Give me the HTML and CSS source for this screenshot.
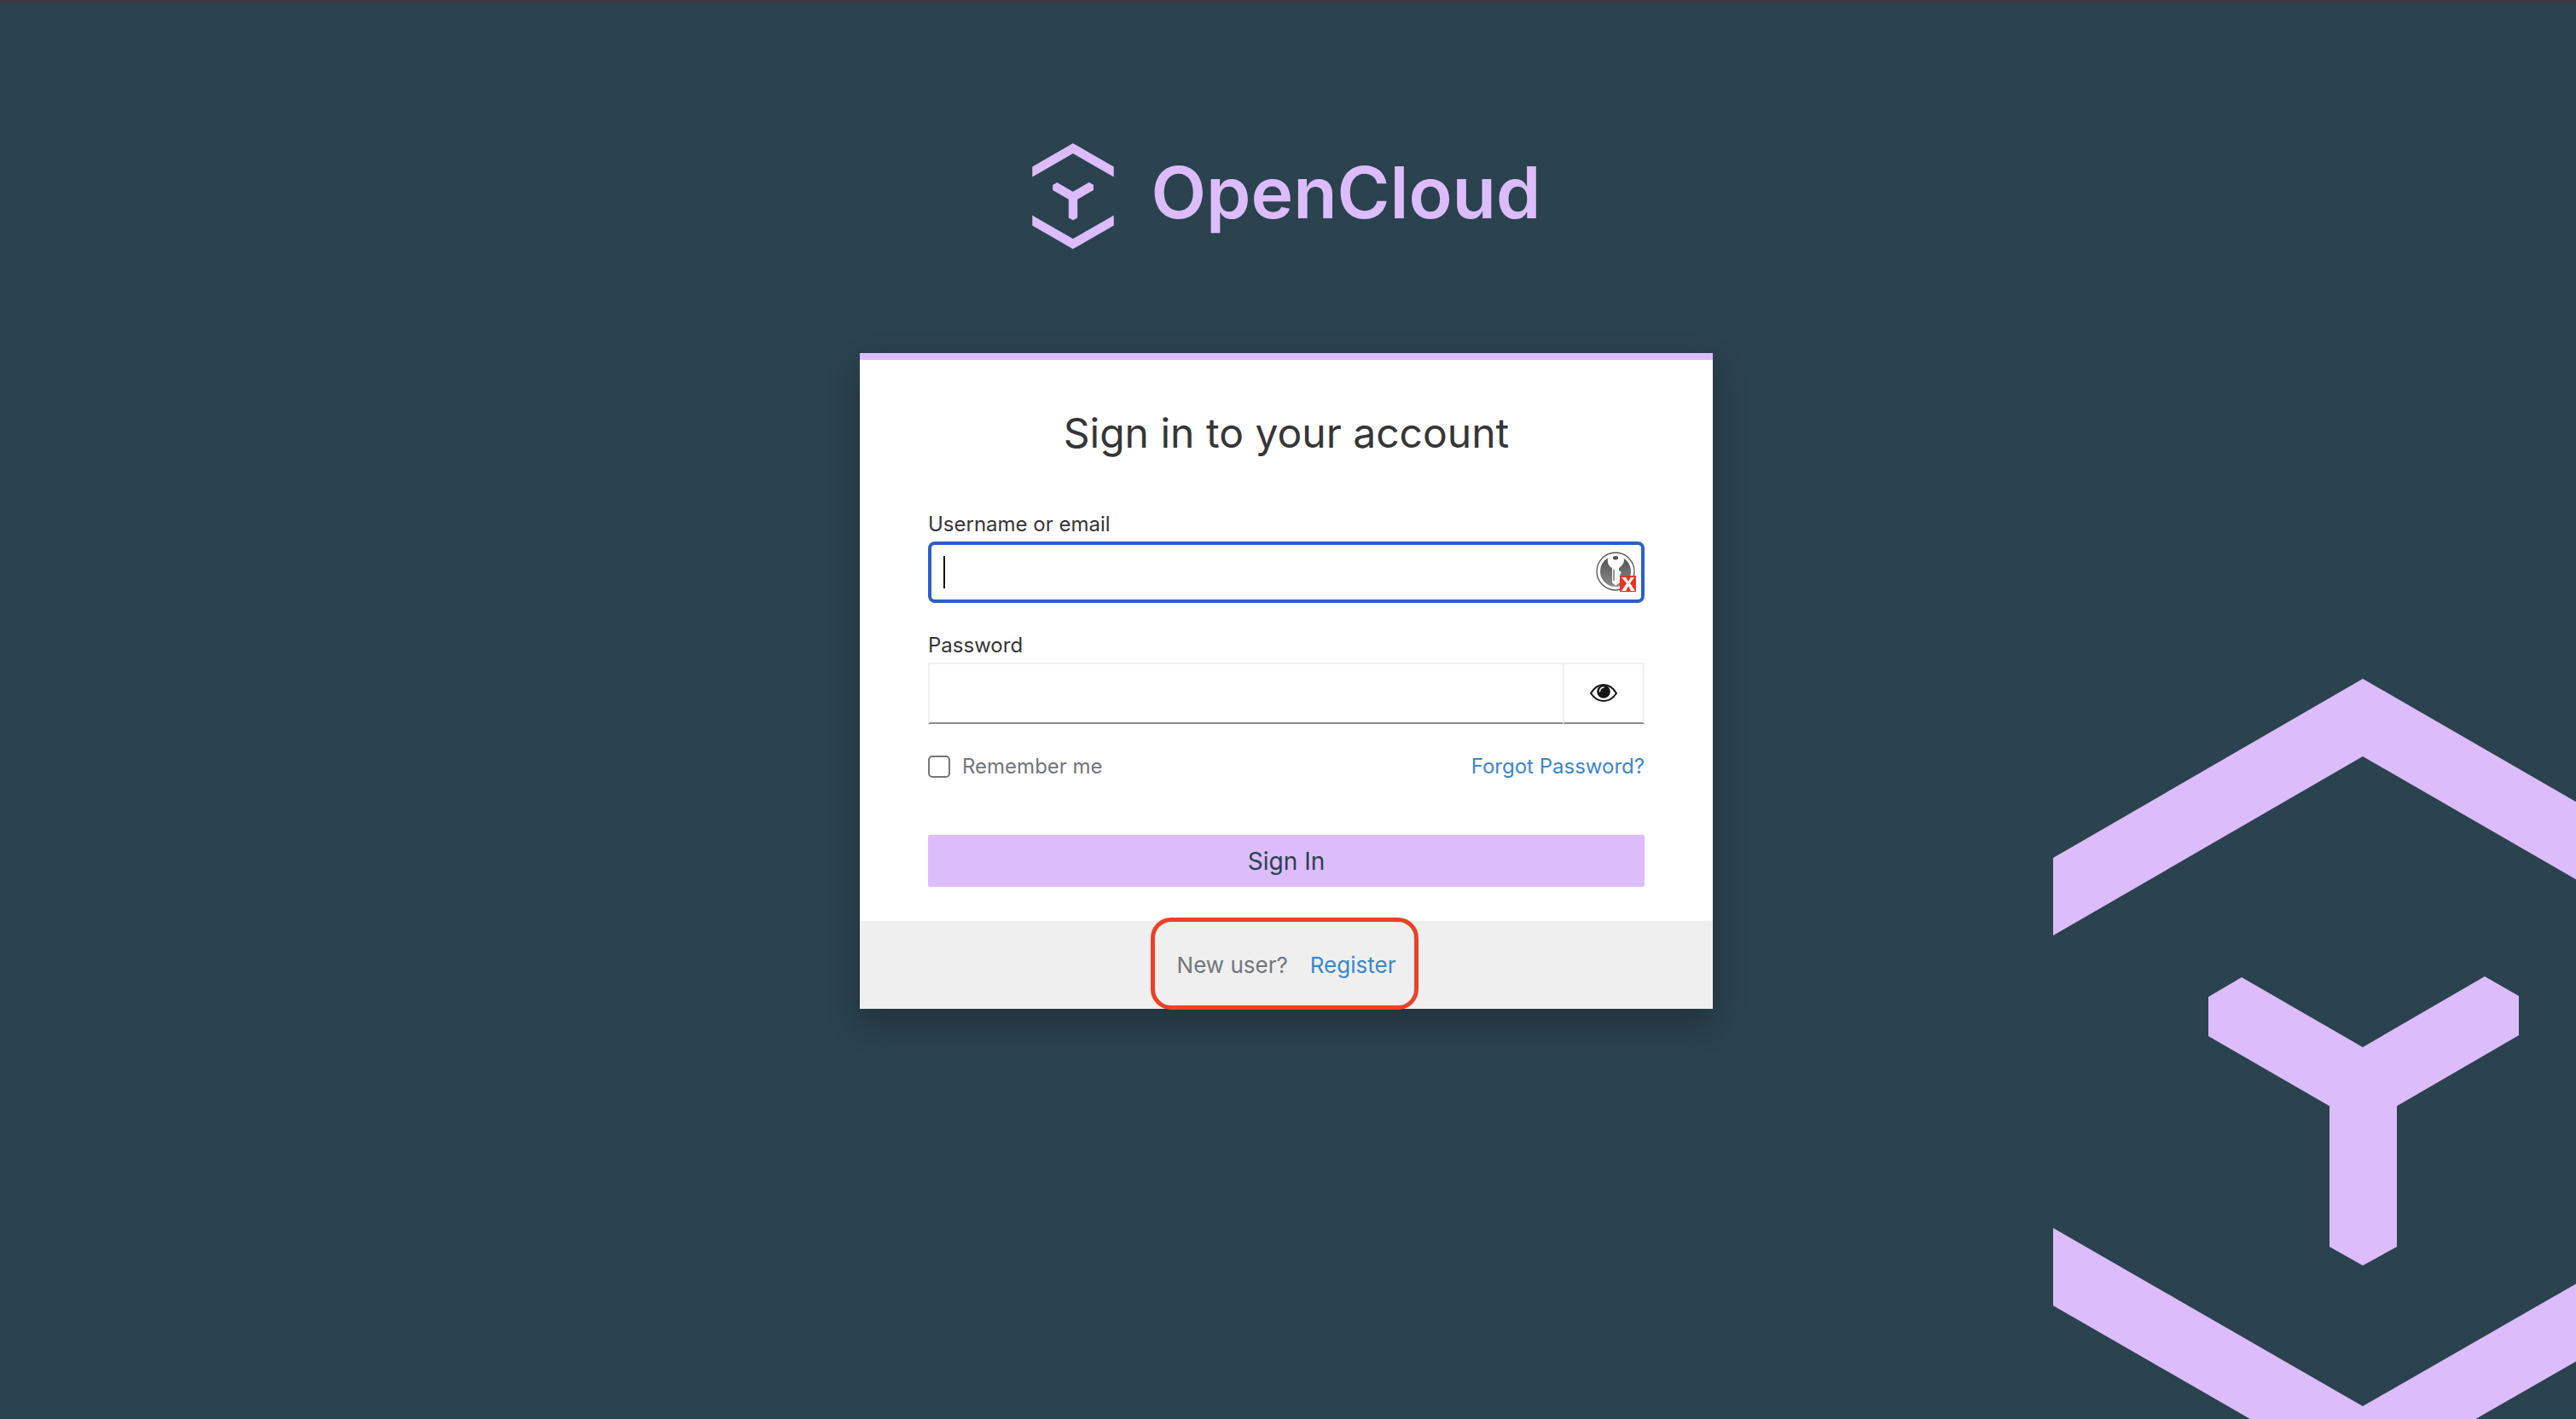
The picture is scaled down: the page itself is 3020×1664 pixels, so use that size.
FILE: index.html
```html
<!DOCTYPE html>
<html lang="en">
<head>
<meta charset="utf-8">
<title>Sign in to OpenCloud</title>
<link rel="stylesheet" href="styles.css">
</head>
<body>
<svg class="defs" aria-hidden="true">
  <symbol id="mark" viewBox="0 0 727 944">
    <path d="M0 210 363 0 727 210V301L363 91 0 301ZM182 373 221 350 363 432 506 349 546 372V418L403 501V666L363 688 324 666V501L182 419ZM0 644 363 853 727 644V735L363 944 0 735Z"/>
  </symbol>
</svg>
<svg class="backdrop-mark" aria-hidden="true"><use href="#mark"/></svg>
<header class="brand">
  <svg class="brand-mark" aria-hidden="true"><use href="#mark"/></svg>
  <span class="brand-name">OpenCloud</span>
</header>
<main class="card">
  <h1 class="title">Sign in to your account</h1>
  <form class="form">
    <div class="field">
      <label class="label" for="username">Username or email</label>
      <div class="control control-focused">
        <span class="caret"></span>
        <input class="input" id="username" type="text">
        <svg class="keepass" viewBox="0 0 48 48" aria-hidden="true">
          <defs>
            <linearGradient id="disc" x1="0" y1="0" x2="0" y2="1"><stop offset="0" stop-color="#505050"/><stop offset="1" stop-color="#8a8a8a"/></linearGradient>
          </defs>
          <circle cx="23" cy="23" r="22" fill="#fff" stroke="#555" stroke-width="1.3"/>
          <circle cx="23" cy="23" r="18" fill="url(#disc)"/>
          <path d="M15 4h16l2 5c0 5-3 8-6 10v3l3 2-2 3 2 2-2 4v3l-5 4-4-4V19c-4-2-6-6-5-11z" fill="#fff"/>
          <path d="M20 6q3-2 6 0v2q-3 3-6 0z" fill="#505050"/>
          <path d="M21 21v13" stroke="#777" stroke-width="1.5"/>
          <path d="M28 28h19v19H28z" fill="#ee3124"/>
          <path d="M30 30h5l3 5 3-5h4l-5 7 6 9h-5l-3-6-3 6h-5l6-9z" fill="#fff"/>
        </svg>
      </div>
    </div>
    <div class="field">
      <label class="label" for="password">Password</label>
      <div class="control">
        <input class="input input-plain" id="password" type="password">
        <button class="reveal" type="button" aria-label="Show password">
          <svg class="eye" viewBox="0 0 32 22" aria-hidden="true">
            <path d="M1 11Q7 1 16 1t15 10Q25 20 16 20T1 11Z" fill="#fff" stroke="#151515" stroke-width="2"/>
            <circle cx="16" cy="9" r="7.8" fill="#151515"/>
            <path d="M11.5 9q0-4.500 4.500-5" fill="none" stroke="#fff" stroke-width="1.400" stroke-linecap="round"/>
          </svg>
        </button>
      </div>
    </div>
    <div class="options">
      <label class="remember"><input class="checkbox" type="checkbox">Remember me</label>
      <a class="link" href="#forgot">Forgot Password?</a>
    </div>
    <button class="submit" type="submit">Sign In</button>
  </form>
  <footer class="signup">
    <div class="signup-callout">
      <span>New user?</span>
      <a class="link" href="#register">Register</a>
    </div>
  </footer>
</main>
</body>
</html>
```
FILE: styles.css
```css
* {
  box-sizing: border-box;
}

body {
  position: relative;
  display: flex;
  flex-direction: column;
  align-items: center;
  min-height: 100vh;
  margin: 0;
  padding: 164px 4px 0 0;
  overflow: hidden;
  border-top: 4px solid #3a3a3f;
  background: #2b424f;
  color: #363636;
  font-family: Inter, "Open Sans", sans-serif;
  font-size: 24px;
  line-height: 32px;
}

.defs {
  position: absolute;
  width: 0;
  height: 0;
}

.backdrop-mark {
  position: absolute;
  right: -114px;
  bottom: -76px;
  width: 727px;
  height: 944px;
  fill: #dcbcfb;
}

.brand {
  display: flex;
  align-items: center;
  gap: 44px;
  height: 124px;
  margin-bottom: 122px;
  color: #dcbcfb;
}

.brand-mark {
  width: 96px;
  height: 124px;
  fill: currentColor;
}

.brand-name {
  padding-bottom: 8px;
  font-size: 84px;
  font-weight: 600;
  line-height: 112px;
}

.card {
  position: relative;
  width: 100%;
  max-width: 1000px;
  border-top: 8px solid #dcbcfb;
  background: #fff;
  box-shadow: 0 16px 32px rgba(20, 30, 34, 0.4);
}

.title {
  margin: 0;
  padding-top: 54px;
  font-size: 48px;
  font-weight: 400;
  line-height: 64px;
  text-align: center;
}

.form {
  display: flex;
  flex-direction: column;
  padding: 59px 80px 40px;
}

.field {
  display: flex;
  flex-direction: column;
  gap: 4px;
  margin-bottom: 34px;
}

.label {
  line-height: 32px;
}

.control {
  position: relative;
  display: flex;
  height: 72px;
}

.control-focused {
  align-items: center;
  padding-right: 5px;
  border: 4px solid #2b5fc9;
  border-radius: 8px;
}

.input {
  flex: 1;
  min-width: 0;
  height: 100%;
  padding: 0 16px;
  border: 0;
  outline: 0;
  background: transparent;
  font: inherit;
}

.input-plain {
  border: 2px solid #f0f0f0;
  border-right: 0;
  border-bottom-color: #8a8a8f;
}

.caret {
  position: absolute;
  left: 14px;
  width: 2px;
  height: 38px;
  background: #111;
}

.keepass {
  width: 48px;
  height: 48px;
}

.reveal {
  display: flex;
  align-items: center;
  justify-content: center;
  width: 96px;
  padding: 0;
  border: 2px solid #f0f0f0;
  border-bottom-color: #8a8a8f;
  background: #fff;
}

.eye {
  width: 32px;
  height: 22px;
}

.options {
  display: flex;
  align-items: center;
  justify-content: space-between;
  margin-bottom: 64px;
  color: #72767b;
}

.remember {
  display: flex;
  align-items: center;
  gap: 14px;
}

.checkbox {
  appearance: none;
  width: 26px;
  height: 26px;
  margin: 0;
  border: 2px solid #767676;
  border-radius: 5px;
  background: #fff;
}

.link {
  color: #3a87cd;
  text-decoration: none;
}

.submit {
  height: 61px;
  padding: 0;
  border: 0;
  border-radius: 2px;
  background: #dcbcfb;
  color: #2b424f;
  font: inherit;
  font-size: 28px;
}

.signup {
  display: flex;
  justify-content: center;
  height: 103px;
  background: #efefef;
  color: #72767b;
  font-size: 26px;
}

.signup-callout {
  position: relative;
  display: flex;
  align-items: center;
  gap: 26px;
}

/* ring around the registration prompt */
.signup-callout::after {
  content: "";
  position: absolute;
  inset: -4px -27px -1px -31px;
  border: 5px solid #ec4127;
  border-radius: 24px;
  pointer-events: none;
}
```
